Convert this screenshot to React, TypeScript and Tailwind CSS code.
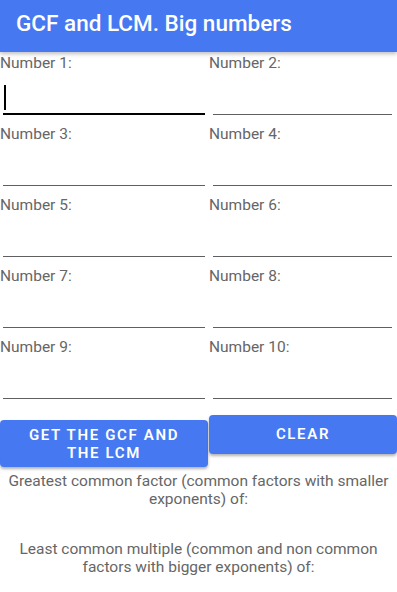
import React from "react";

const cells = [
  ["Number 1:", "Number 2:"],
  ["Number 3:", "Number 4:"],
  ["Number 5:", "Number 6:"],
  ["Number 7:", "Number 8:"],
  ["Number 9:", "Number 10:"],
];

function Field({ label, left, active }: { label: string; left: boolean; active?: boolean }) {
  return (
    <div className="flex flex-col">
      <div className="h-[20px] pt-[3px] text-[15.5px] leading-[17px] text-[#666666]">{label}</div>
      <div
        className={
          "relative h-[43px] " +
          (left ? "ml-[3px] mr-[4px] " : "ml-[4px] mr-[5px] ") +
          (active ? "border-b-2 border-black" : "border-b border-[#5f5f5f]")
        }
      >
        {active && <span className="absolute left-[1px] top-[13px] h-[25px] w-[2px] bg-black" />}
      </div>
    </div>
  );
}

export default function App() {
  return (
    <div className="w-[397px] h-[592px] overflow-hidden bg-white" style={{ fontFamily: "Roboto, 'Liberation Sans', sans-serif" }}>
      <div className="relative z-10 h-[52px] bg-[#4679f1] pl-[16px] pt-[8px] shadow-[0_2px_4px_rgba(0,0,0,0.25)]">
        <h1 className="text-[22.5px] font-medium leading-[30px] text-white">GCF and LCM. Big numbers</h1>
      </div>

      <div className="grid grid-cols-[209px_1fr] gap-y-[8px]">
        {cells.map(([a, b], i) => (
          <React.Fragment key={a}>
            <Field label={a} left active={i === 0} />
            <Field label={b} left={false} />
          </React.Fragment>
        ))}
      </div>

      <div className="mt-[7px] grid grid-cols-[209px_1fr] items-start">
        <button className="mt-[14px] mr-[1px] flex h-[47px] flex-col items-center justify-center rounded-[4px] bg-[#4679f1] text-[15px] font-semibold leading-[18px] tracking-[0.11em] text-white shadow-[0_2px_3px_rgba(0,0,0,0.3)]">
          <span>GET THE GCF AND</span>
          <span>THE LCM</span>
        </button>
        <button className="mt-[9px] flex h-[39px] items-center justify-center rounded-[4px] bg-[#4679f1] text-[15px] font-semibold tracking-[0.11em] text-white shadow-[0_2px_3px_rgba(0,0,0,0.3)]">
          CLEAR
        </button>
      </div>

      <p className="mt-[5px] px-[8px] text-center text-[15.5px] leading-[18px] text-[#666666]">
        Greatest common factor (common factors with smaller exponents) of:
      </p>
      <p className="mt-[32px] px-[8px] text-center text-[15.5px] leading-[18px] text-[#666666]">
        Least common multiple (common and non common factors with bigger exponents) of:
      </p>
    </div>
  );
}
